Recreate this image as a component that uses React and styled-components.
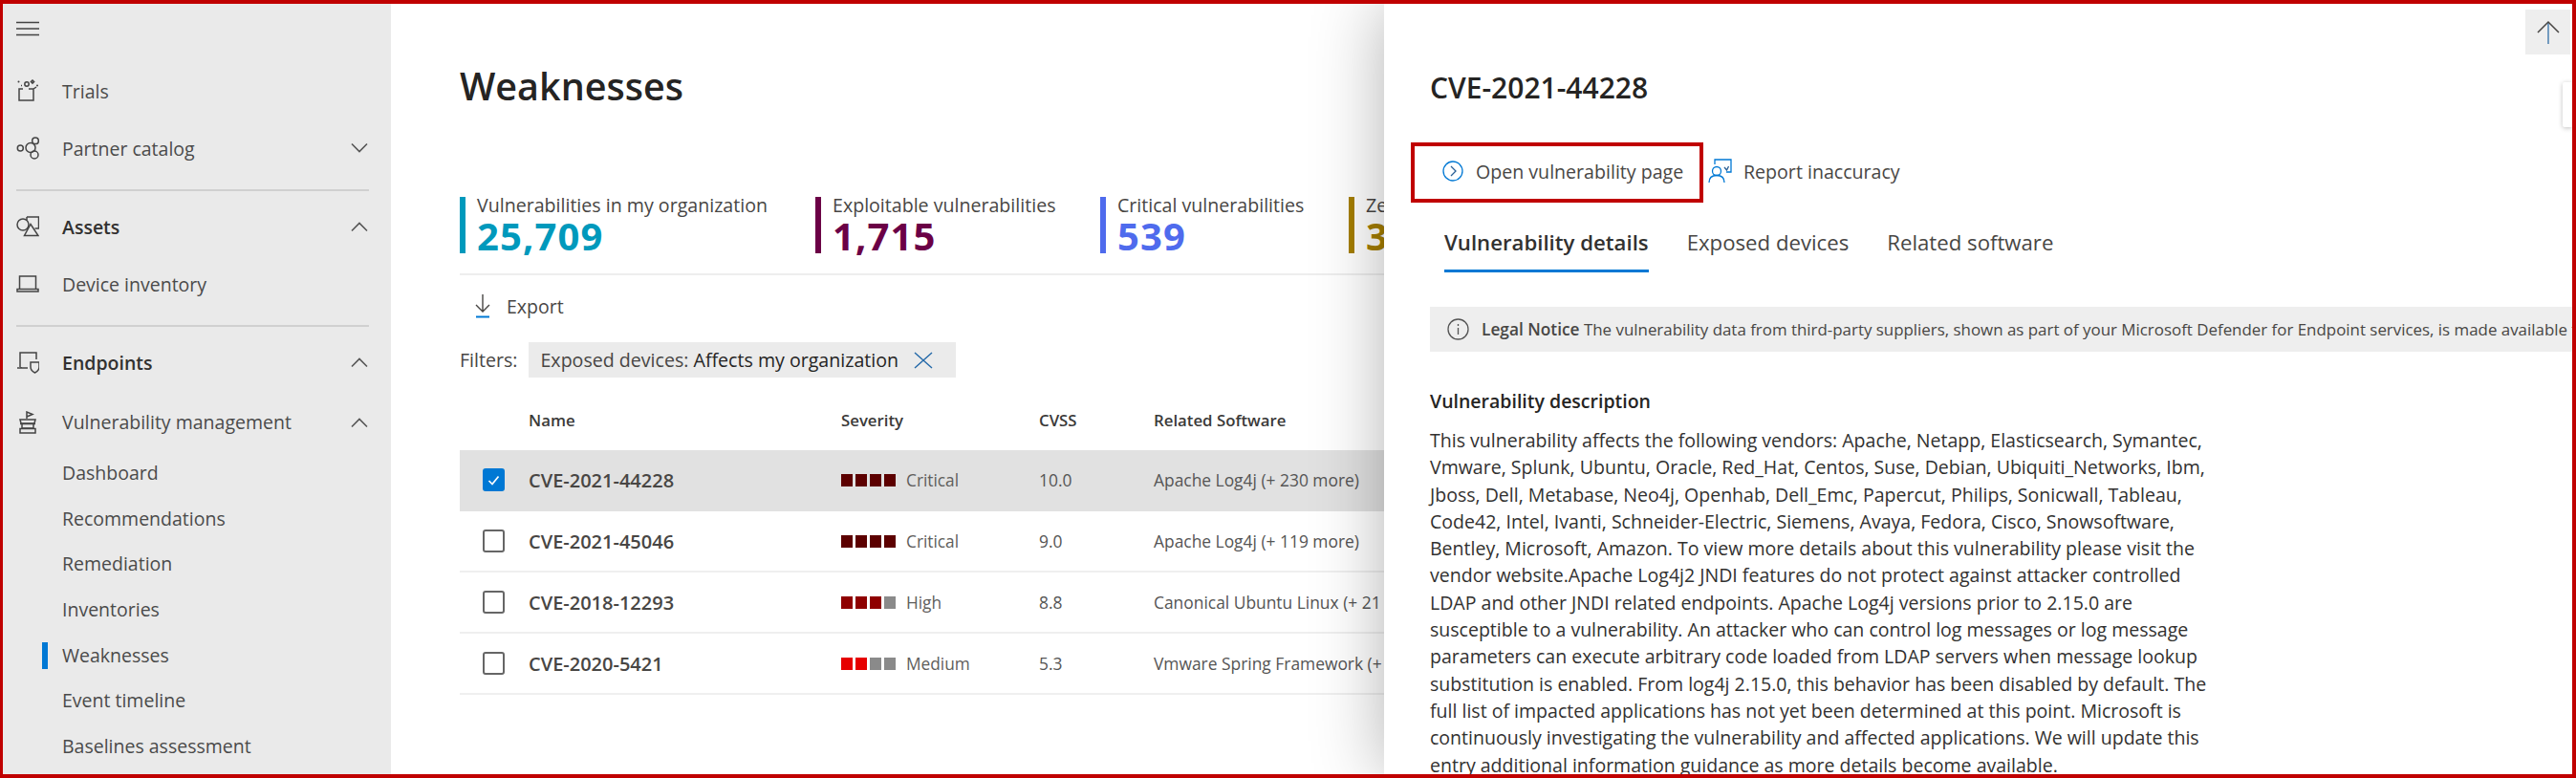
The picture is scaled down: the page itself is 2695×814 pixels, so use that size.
import React from "react"
import styled, { createGlobalStyle } from "styled-components"

const GlobalStyle = createGlobalStyle`
	html, body {
		margin: 0;
		padding: 0;
		background: #fff;
		overflow: hidden;
	}
	* {
		box-sizing: border-box;
	}
	svg {
		flex-shrink: 0;
	}
	body {
		font-family: "Open Sans", "Noto Sans", sans-serif;
		color: #323130;
	}
`

const Frame = styled.div`
	position: relative;
	display: flex;
	width: 2695px;
	height: 814px;
	border: solid #c00000;
	border-width: 4px 4px 4px 3px;
	overflow: hidden;
	background: #fff;
`

/* sidebar */
const Sidebar = styled.nav`
	flex: 0 0 406px;
	height: 100%;
	padding-left: 14px;
	background: #eaeaea;
`

const MenuRow = styled.div`
	height: 61px;
	padding-top: 15px;
	color: #444;
`

const NavRow = styled.div`
	display: flex;
	align-items: center;
	width: 369px;
	height: ${p => p.$height || 60}px;
	margin-bottom: ${p => p.$after || 0}px;
	font-size: 19.5px;
	font-weight: ${p => (p.$bold ? 600 : 400)};
	color: ${p => (p.$bold ? "#323130" : "#4a4a4a")};
`

const NavIcon = styled.span`
	display: flex;
	flex: 0 0 48px;
	color: #444;
`

const NavLabel = styled.span`
	flex: 1;
	white-space: nowrap;
`

const NavDivider = styled.div`
	width: 369px;
	height: 2px;
	margin: ${p => p.$margin};
	background: #d0d0d0;
`

const SubRow = styled.div`
	position: relative;
	height: 47.67px;
	padding-left: 48px;
	font-size: 19.5px;
	line-height: 47px;
	color: #4a4a4a;
	white-space: nowrap;
	&::before {
		content: "";
		display: ${p => (p.$active ? "block" : "none")};
		position: absolute;
		left: 27px;
		top: 10px;
		width: 6px;
		height: 28px;
		background: #0078d4;
	}
`

/* main page */
const Main = styled.main`
	flex: 1;
	min-width: 0;
	padding-left: 72px;
`

const PageTitle = styled.h1`
	margin: 56px 0 0;
	font-size: 39.5px;
	line-height: 60px;
	font-weight: 600;
	color: #252423;
`

const Stats = styled.div`
	display: grid;
	grid-template-columns: 372px 298px 260px 260px;
	margin-top: 86px;
`

const Stat = styled.div`
	height: 59px;
	padding-left: 12px;
	border-left: 6px solid ${p => p.$color};
	color: ${p => p.$color};
	white-space: nowrap;
`

const StatLabel = styled.div`
	font-size: 19.6px;
	line-height: 18px;
	color: #484644;
`

const StatValue = styled.div`
	font-size: 40px;
	line-height: 41px;
	font-weight: 700;
	letter-spacing: 1.1px;
	margin-top: 2px;
`

const Rule = styled.div`
	height: 2px;
	margin-top: 21px;
	background: #eee;
`

const ExportRow = styled.div`
	display: flex;
	align-items: center;
	gap: 16px;
	height: 64px;
	padding-left: 15px;
	font-size: 19.5px;
	color: #484644;
`

const FilterRow = styled.div`
	display: flex;
	align-items: center;
	gap: 12px;
	margin-top: 6px;
	font-size: 19.6px;
	color: #484644;
`

const Chip = styled.div`
	display: flex;
	align-items: center;
	justify-content: space-between;
	width: 447px;
	height: 37px;
	padding: 0 24px 0 12px;
	background: #ebebeb;
	white-space: nowrap;
	b {
		font-weight: 400;
		color: #252423;
	}
`

const Columns = styled.div`
	display: grid;
	grid-template-columns: 72px 327px 207px 120px 400px;
	align-items: center;
`

const TableHead = styled(Columns)`
	height: 76px;
	padding-top: 12px;
	font-size: 16.8px;
	font-weight: 600;
	color: #3b3a39;
`

const TableRow = styled(Columns)`
	height: 64px;
	border-bottom: 2px solid ${p => (p.$selected ? "#e1e1e1" : "#efefef")};
	background: ${p => (p.$selected ? "#e1e1e1" : "#fff")};
`

const Check = styled.span`
	display: flex;
	align-items: center;
	justify-content: center;
	width: 23px;
	height: 24px;
	margin-left: 24px;
	border-radius: 3px;
	border: 2px solid ${p => (p.$on ? "#0078d4" : "#666")};
	background: ${p => (p.$on ? "#0078d4" : "#fff")};
`

const CveName = styled.span`
	font-size: 20px;
	font-weight: 600;
	color: #484644;
	white-space: nowrap;
`

const Cell = styled.span`
	font-size: 17.4px;
	color: #555;
	white-space: nowrap;
`

const Severity = styled.div`
	display: flex;
	align-items: center;
	font-size: 17.3px;
	color: #605e5c;
`

const Blocks = styled.span`
	display: flex;
	gap: 3px;
	margin-right: 11px;
`

const Block = styled.i`
	width: 12px;
	height: 13px;
	background: ${p => p.$color};
`

/* slide-in panel */
const Panel = styled.aside`
	position: absolute;
	top: 0;
	right: 0;
	bottom: 0;
	left: 1445px;
	padding-left: 48px;
	background: #fff;
	box-shadow: 0 0 70px rgba(0, 0, 0, 0.3);
	overflow: hidden;
`

const ScrollTop = styled.div`
	position: absolute;
	top: 6px;
	right: 2px;
	display: flex;
	align-items: center;
	justify-content: center;
	width: 47px;
	height: 47px;
	background: #eee;
`

const SideTab = styled.div`
	position: absolute;
	top: 82px;
	right: 0;
	width: 10px;
	height: 47px;
	border-radius: 2px 0 0 2px;
	background: #fff;
	box-shadow: 0 1px 5px rgba(0, 0, 0, 0.25);
`

const PanelTitle = styled.h2`
	margin: 64px 0 0;
	font-size: 30px;
	line-height: 48px;
	font-weight: 600;
	color: #252423;
`

const Actions = styled.div`
	display: flex;
	align-items: center;
	margin: 33px 0 0 -20px;
	font-size: 19.6px;
	color: #484644;
`

const Highlight = styled.div`
	display: flex;
	align-items: center;
	gap: 13px;
	width: 306px;
	height: 63px;
	padding: 0 0 3px 29px;
	border: 4px solid #c00000;
	white-space: nowrap;
`

const ReportAction = styled.div`
	display: flex;
	align-items: center;
	gap: 12px;
	margin: 0 0 3px 5px;
	white-space: nowrap;
`

const Tabs = styled.div`
	display: flex;
	gap: 40px;
	height: 73px;
	margin-left: 15px;
`

const Tab = styled.div`
	height: 73px;
	padding-top: 24px;
	border-bottom: 3px solid ${p => (p.$active ? "#0078d4" : "transparent")};
	font-size: 22.2px;
	line-height: 36px;
	font-weight: ${p => (p.$active ? 600 : 400)};
	color: ${p => (p.$active ? "#323130" : "#484644")};
	white-space: nowrap;
`

const Notice = styled.div`
	display: flex;
	align-items: center;
	gap: 13px;
	height: 47px;
	margin-top: 36px;
	padding-left: 18px;
	background: #eee;
	font-size: 16.9px;
	color: #484644;
	white-space: nowrap;
	b {
		font-size: 17.3px;
		font-weight: 600;
	}
`

const SectionTitle = styled.h3`
	margin: 38px 0 13px;
	font-size: 19.5px;
	line-height: 28px;
	font-weight: 600;
	color: #252423;
`

const DescLine = styled.div`
	font-size: 19.55px;
	line-height: 28.3px;
	color: #323130;
	white-space: nowrap;
`

const Chevron = ({ up }) => (
	<svg width="20" height="12" viewBox="0 0 20 12" fill="none" stroke="#555" strokeWidth="1.6">
		<path d={up ? "M2 10.5 10 2.5l8 8" : "M2 1.5l8 8 8-8"} />
	</svg>
)

const iconProps = { width: 24, height: 24, viewBox: "0 0 24 24", fill: "none", stroke: "currentColor", strokeWidth: 1.5 }

const TrialsIcon = () => (
	<svg {...iconProps}>
		<path d="M7 10H3v12h15V10h-2M3 10h4m6 0h5l3-2" />
		<circle cx="11" cy="5" r="2.2" />
		<path d="M17 1l1.6 1.6L17 4.2l-1.6-1.6z" />
		<circle cx="2.5" cy="2.5" r="1" fill="currentColor" stroke="none" />
		<circle cx="22" cy="6.5" r="1" fill="currentColor" stroke="none" />
		<path d="M5 6.5h1" />
	</svg>
)

const PartnerIcon = () => (
	<svg {...iconProps}>
		<circle cx="4.3" cy="12" r="3" />
		<circle cx="15" cy="11.5" r="5" />
		<circle cx="20" cy="4.3" r="3.3" />
		<circle cx="19" cy="19" r="4" />
	</svg>
)

const AssetsIcon = () => (
	<svg {...iconProps}>
		<path d="M11 2h12.5v12h-4" />
		<path d="M11 2v3" />
		<circle cx="7" cy="10" r="6" />
		<path d="M15 9.5 8.5 21.5h14.5z" />
	</svg>
)

const LaptopIcon = () => (
	<svg {...iconProps}>
		<path d="M3.5 17V4h17v13" />
		<path d="M1 17.5h22V20H1z" />
	</svg>
)

const EndpointIcon = () => (
	<svg {...iconProps}>
		<path d="M4 17V2h17v7" />
		<path d="M1 18h11" />
		<path d="M5 17v1" />
		<path d="M15 12h9v5c0 3-2.500 5-4.500 6-2-1-4.500-3-4.500-6z" />
	</svg>
)

const VulnIcon = () => (
	<svg {...iconProps}>
		<path d="M11 8V1l6 2.500-6 2.500" />
		<path d="M4 9h16l-1 4H5z" />
		<path d="M4 13.500h16M6 14v4h12v-4" />
		<path d="M4 18.500h16V23H4z" />
	</svg>
)

const ExportIcon = () => (
	<svg width="18" height="26" viewBox="0 0 18 26">
		<path d="M9 1v17M2 12l7 7 7-7" fill="none" stroke="#484644" strokeWidth="1.4" />
		<path d="M2 24.500h14" stroke="#0078d4" strokeWidth="2" />
	</svg>
)

const ChipClose = () => (
	<svg width="20" height="18" viewBox="0 0 20 18">
		<path d="M1 1l18 16M19 1 1 17" fill="none" stroke="#2268a8" strokeWidth="1.4" />
	</svg>
)

const CheckMark = () => (
	<svg width="13" height="11" viewBox="0 0 13 11">
		<path d="M1.500 6l3.500 3.500 6.500-8" fill="none" stroke="#fff" strokeWidth="1.7" />
	</svg>
)

const OpenIcon = () => (
	<svg width="22" height="22" viewBox="0 0 22 22" fill="none" stroke="#0078d4" strokeWidth="1.3">
		<circle cx="11" cy="11" r="10" />
		<path d="M9 6l5 5-5 5" stroke="#2a5f95" />
	</svg>
)

const ReportIcon = () => (
	<svg width="25" height="26" viewBox="0 0 25 26" fill="none" stroke="#0078d4" strokeWidth="1.3">
		<circle cx="9" cy="13" r="4.500" />
		<path d="M1 25c0-5 3-7.500 8-7.500s8 2.500 8 7.500" />
		<path d="M7 6V1h17v13h-5" />
		<path d="M17 9l2.500 3 2-4" stroke="#2a5f95" />
	</svg>
)

const InfoIcon = () => (
	<svg width="23" height="23" viewBox="0 0 23 23" fill="none" stroke="#555" strokeWidth="1.3">
		<circle cx="11.500" cy="11.500" r="10.500" />
		<path d="M11.500 10v7M11.500 6v2" />
	</svg>
)

const UpArrow = () => (
	<svg width="24" height="26" viewBox="0 0 24 26" fill="none" strokeWidth="1.5">
		<path d="M12 2v23" stroke="#4a7fb0" />
		<path d="M1 13 12 2l11 11" stroke="#484644" />
	</svg>
)

const RED_DARK = "#5c0000"
const RED = "#8f0000"
const RED_LIGHT = "#e60000"
const GRAY = "#8a8a8a"

const rows = [
	{ name: "CVE-2021-44228", blocks: [RED_DARK, RED_DARK, RED_DARK, RED_DARK], level: "Critical", cvss: "10.0", software: "Apache Log4j (+ 230 more)", selected: true },
	{ name: "CVE-2021-45046", blocks: [RED_DARK, RED_DARK, RED_DARK, RED_DARK], level: "Critical", cvss: "9.0", software: "Apache Log4j (+ 119 more)" },
	{ name: "CVE-2018-12293", blocks: [RED, RED, RED, GRAY], level: "High", cvss: "8.8", software: "Canonical Ubuntu Linux (+ 21 more)" },
	{ name: "CVE-2020-5421", blocks: [RED_LIGHT, RED_LIGHT, GRAY, GRAY], level: "Medium", cvss: "5.3", software: "Vmware Spring Framework (+ 4 more)" },
]

const description = [
	"This vulnerability affects the following vendors: Apache, Netapp, Elasticsearch, Symantec,",
	"Vmware, Splunk, Ubuntu, Oracle, Red_Hat, Centos, Suse, Debian, Ubiquiti_Networks, Ibm,",
	"Jboss, Dell, Metabase, Neo4j, Openhab, Dell_Emc, Papercut, Philips, Sonicwall, Tableau,",
	"Code42, Intel, Ivanti, Schneider-Electric, Siemens, Avaya, Fedora, Cisco, Snowsoftware,",
	"Bentley, Microsoft, Amazon. To view more details about this vulnerability please visit the",
	"vendor website.Apache Log4j2 JNDI features do not protect against attacker controlled",
	"LDAP and other JNDI related endpoints. Apache Log4j versions prior to 2.15.0 are",
	"susceptible to a vulnerability. An attacker who can control log messages or log message",
	"parameters can execute arbitrary code loaded from LDAP servers when message lookup",
	"substitution is enabled. From log4j 2.15.0, this behavior has been disabled by default. The",
	"full list of impacted applications has not yet been determined at this point. Microsoft is",
	"continuously investigating the vulnerability and affected applications. We will update this",
	"entry additional information guidance as more details become available.",
]

const subItems = ["Dashboard", "Recommendations", "Remediation", "Inventories", "Weaknesses", "Event timeline", "Baselines assessment"]

export default function App() {
	return (
		<Frame>
			<GlobalStyle />
			<Sidebar>
				<MenuRow>
					<svg width="24" height="22" viewBox="0 0 24 22" stroke="currentColor" strokeWidth="1.6">
						<path d="M0 4.500h24M0 11h24M0 17.500h24" />
					</svg>
				</MenuRow>
				<NavRow><NavIcon><TrialsIcon /></NavIcon><NavLabel>Trials</NavLabel></NavRow>
				<NavRow><NavIcon><PartnerIcon /></NavIcon><NavLabel>Partner catalog</NavLabel><Chevron /></NavRow>
				<NavDivider $margin="13px 0 7px" />
				<NavRow $bold><NavIcon><AssetsIcon /></NavIcon><NavLabel>Assets</NavLabel><Chevron up /></NavRow>
				<NavRow><NavIcon><LaptopIcon /></NavIcon><NavLabel>Device inventory</NavLabel></NavRow>
				<NavDivider $margin="13px 0 7px" />
				<NavRow $bold $after={3}><NavIcon><EndpointIcon /></NavIcon><NavLabel>Endpoints</NavLabel><Chevron up /></NavRow>
				<NavRow $height={59}><NavIcon><VulnIcon /></NavIcon><NavLabel>Vulnerability management</NavLabel><Chevron up /></NavRow>
				{subItems.map(item => (
					<SubRow key={item} $active={item === "Weaknesses"}>{item}</SubRow>
				))}
			</Sidebar>

			<Main>
				<PageTitle>Weaknesses</PageTitle>
				<Stats>
					<Stat $color="#0099bc"><StatLabel>Vulnerabilities in my organization</StatLabel><StatValue>25,709</StatValue></Stat>
					<Stat $color="#6b0046"><StatLabel>Exploitable vulnerabilities</StatLabel><StatValue>1,715</StatValue></Stat>
					<Stat $color="#4f6bed"><StatLabel>Critical vulnerabilities</StatLabel><StatValue>539</StatValue></Stat>
					<Stat $color="#a67f00"><StatLabel>Zero-day vulnerabilities</StatLabel><StatValue>3</StatValue></Stat>
				</Stats>
				<Rule />
				<ExportRow><ExportIcon />Export</ExportRow>
				<FilterRow>
					Filters:
					<Chip>
						<span>Exposed devices: <b>Affects my organization</b></span>
						<ChipClose />
					</Chip>
				</FilterRow>
				<TableHead>
					<span />
					<span>Name</span>
					<span>Severity</span>
					<span>CVSS</span>
					<span>Related Software</span>
				</TableHead>
				{rows.map(row => (
					<TableRow key={row.name} $selected={row.selected}>
						<Check $on={row.selected}>{row.selected && <CheckMark />}</Check>
						<CveName>{row.name}</CveName>
						<Severity>
							<Blocks>{row.blocks.map((c, i) => <Block key={i} $color={c} />)}</Blocks>
							{row.level}
						</Severity>
						<Cell>{row.cvss}</Cell>
						<Cell>{row.software}</Cell>
					</TableRow>
				))}
			</Main>

			<Panel>
				<ScrollTop><UpArrow /></ScrollTop>
				<SideTab />
				<PanelTitle>CVE-2021-44228</PanelTitle>
				<Actions>
					<Highlight><OpenIcon />Open vulnerability page</Highlight>
					<ReportAction><ReportIcon />Report inaccuracy</ReportAction>
				</Actions>
				<Tabs>
					<Tab $active>Vulnerability details</Tab>
					<Tab>Exposed devices</Tab>
					<Tab>Related software</Tab>
				</Tabs>
				<Notice>
					<InfoIcon />
					<span><b>Legal Notice</b> The vulnerability data from third-party suppliers, shown as part of your Microsoft Defender for Endpoint services, is made available to you</span>
				</Notice>
				<SectionTitle>Vulnerability description</SectionTitle>
				{description.map(line => <DescLine key={line}>{line}</DescLine>)}
			</Panel>
		</Frame>
	)
}
